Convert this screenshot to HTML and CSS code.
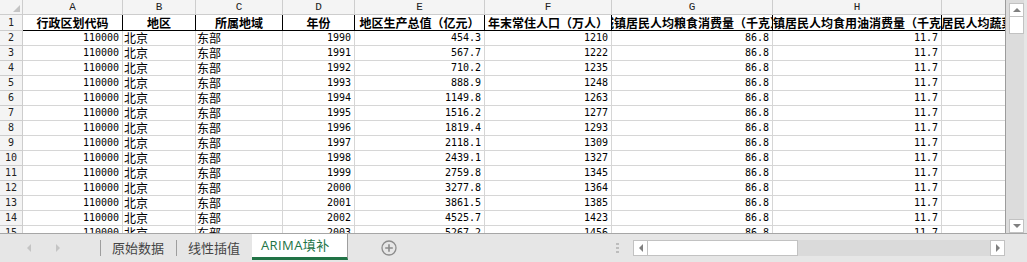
FILE: index.html
```html
<!DOCTYPE html>
<html lang="zh">
<head>
<meta charset="utf-8">
<title>ARIMA填补</title>
<link rel="stylesheet" href="styles.css">
</head>
<body>
<div class="app">
  <div class="main">
    <div class="sheet">
      <div class="grid">
        <div class="c ch corner"><span class="tri"></span></div>
        <div class="c ch">A</div><div class="c ch">B</div><div class="c ch">C</div><div class="c ch">D</div><div class="c ch">E</div><div class="c ch">F</div><div class="c ch">G</div><div class="c ch">H</div><div class="c ch"></div>

        <div class="c rh">1</div>
        <div class="c h"><span>行政区划代码</span></div><div class="c h"><span>地区</span></div><div class="c h"><span>所属地域</span></div><div class="c h"><span>年份</span></div><div class="c h"><span>地区生产总值（亿元）</span></div><div class="c h"><span>年末常住人口（万人）</span></div><div class="c h"><span>城镇居民人均粮食消费量（千克）</span></div><div class="c h"><span>城镇居民人均食用油消费量（千克）</span></div><div class="c h"><span>城镇居民人均蔬菜消费量（千克）</span></div>

        <div class="c rh">2</div><div class="c n">110000</div><div class="c t">北京</div><div class="c t">东部</div><div class="c n">1990</div><div class="c n">454.3</div><div class="c n">1210</div><div class="c n">86.8</div><div class="c n">11.7</div><div class="c"></div>
        <div class="c rh">3</div><div class="c n">110000</div><div class="c t">北京</div><div class="c t">东部</div><div class="c n">1991</div><div class="c n">567.7</div><div class="c n">1222</div><div class="c n">86.8</div><div class="c n">11.7</div><div class="c"></div>
        <div class="c rh">4</div><div class="c n">110000</div><div class="c t">北京</div><div class="c t">东部</div><div class="c n">1992</div><div class="c n">710.2</div><div class="c n">1235</div><div class="c n">86.8</div><div class="c n">11.7</div><div class="c"></div>
        <div class="c rh">5</div><div class="c n">110000</div><div class="c t">北京</div><div class="c t">东部</div><div class="c n">1993</div><div class="c n">888.9</div><div class="c n">1248</div><div class="c n">86.8</div><div class="c n">11.7</div><div class="c"></div>
        <div class="c rh">6</div><div class="c n">110000</div><div class="c t">北京</div><div class="c t">东部</div><div class="c n">1994</div><div class="c n">1149.8</div><div class="c n">1263</div><div class="c n">86.8</div><div class="c n">11.7</div><div class="c"></div>
        <div class="c rh">7</div><div class="c n">110000</div><div class="c t">北京</div><div class="c t">东部</div><div class="c n">1995</div><div class="c n">1516.2</div><div class="c n">1277</div><div class="c n">86.8</div><div class="c n">11.7</div><div class="c"></div>
        <div class="c rh">8</div><div class="c n">110000</div><div class="c t">北京</div><div class="c t">东部</div><div class="c n">1996</div><div class="c n">1819.4</div><div class="c n">1293</div><div class="c n">86.8</div><div class="c n">11.7</div><div class="c"></div>
        <div class="c rh">9</div><div class="c n">110000</div><div class="c t">北京</div><div class="c t">东部</div><div class="c n">1997</div><div class="c n">2118.1</div><div class="c n">1309</div><div class="c n">86.8</div><div class="c n">11.7</div><div class="c"></div>
        <div class="c rh">10</div><div class="c n">110000</div><div class="c t">北京</div><div class="c t">东部</div><div class="c n">1998</div><div class="c n">2439.1</div><div class="c n">1327</div><div class="c n">86.8</div><div class="c n">11.7</div><div class="c"></div>
        <div class="c rh">11</div><div class="c n">110000</div><div class="c t">北京</div><div class="c t">东部</div><div class="c n">1999</div><div class="c n">2759.8</div><div class="c n">1345</div><div class="c n">86.8</div><div class="c n">11.7</div><div class="c"></div>
        <div class="c rh">12</div><div class="c n">110000</div><div class="c t">北京</div><div class="c t">东部</div><div class="c n">2000</div><div class="c n">3277.8</div><div class="c n">1364</div><div class="c n">86.8</div><div class="c n">11.7</div><div class="c"></div>
        <div class="c rh">13</div><div class="c n">110000</div><div class="c t">北京</div><div class="c t">东部</div><div class="c n">2001</div><div class="c n">3861.5</div><div class="c n">1385</div><div class="c n">86.8</div><div class="c n">11.7</div><div class="c"></div>
        <div class="c rh">14</div><div class="c n">110000</div><div class="c t">北京</div><div class="c t">东部</div><div class="c n">2002</div><div class="c n">4525.7</div><div class="c n">1423</div><div class="c n">86.8</div><div class="c n">11.7</div><div class="c"></div>
        <div class="c rh">15</div><div class="c n">110000</div><div class="c t">北京</div><div class="c t">东部</div><div class="c n">2003</div><div class="c n">5267.2</div><div class="c n">1456</div><div class="c n">86.8</div><div class="c n">11.7</div><div class="c"></div>
      </div>
    </div>
    <div class="vscroll">
      <div class="vtrack">
        <div class="btn vbtn"><span class="ar up"></span></div>
        <div class="vthumb"></div>
        <div class="fill"></div>
        <div class="btn vbtn"><span class="ar down"></span></div>
      </div>
    </div>
  </div>
  <div class="bar">
    <div class="nav"><span class="nar nl"></span><span class="nar nr"></span></div>
    <div class="sep"></div>
    <div class="tab">原始数据</div>
    <div class="sep"></div>
    <div class="tab">线性插值</div>
    <div class="tab active">ARIMA填补</div>
    <div class="add">
      <svg width="16" height="16" viewBox="0 0 16 16"><circle cx="8" cy="8" r="7" fill="none" stroke="#8c8c8c" stroke-width="1.3"/><path d="M8 4.2v7.6M4.2 8h7.6" stroke="#8c8c8c" stroke-width="1.6"/></svg>
    </div>
    <div class="dots"><i></i><i></i><i></i></div>
    <div class="hscroll">
      <div class="btn hbtn"><span class="ar left"></span></div>
      <div class="hthumb"></div>
      <div class="fill"></div>
      <div class="btn hbtn"><span class="ar right"></span></div>
    </div>
  </div>
</div>
</body>
</html>
```

FILE: styles.css
```css
* { box-sizing: border-box; margin: 0; padding: 0; }
html, body { width: 1027px; height: 262px; overflow: hidden; background: #e6e6e6; }
body { font-family: "Noto Sans CJK SC", sans-serif; color: #000; }

.app { display: flex; flex-direction: column; height: 262px; }
.main { display: flex; height: 234px; border-bottom: 1px solid #a6a6a6; }

.sheet { width: 1006px; height: 233px; overflow: hidden; border-right: 1px solid #9c9c9c; background: #fff; flex: none; }
.grid {
  display: grid;
  grid-template-columns: 23px 100px 73px 87px 72px 130px 127px 161px 169px 132px;
  grid-template-rows: 15px 16px repeat(14, 15px);
  width: max-content;
}
.c {
  border-right: 1px solid #d6d6d6;
  border-bottom: 1px solid #d6d6d6;
  overflow: hidden;
  white-space: nowrap;
  font-size: 12px;
  line-height: 14px;
  display: flex;
  align-items: center;
}
.ch, .rh {
  background: #f4f4f4;
  justify-content: center;
  font-family: "Liberation Mono", monospace;
  font-size: 11px;
  border-color: #cdcdcd;
  color: #222;
}
.rh { font-family: "DejaVu Sans Mono", monospace; font-size: 10px; }
.corner { position: relative; }
.tri {
  position: absolute; right: 2px; bottom: 2px;
  width: 0; height: 0;
  border-left: 7px solid transparent;
  border-bottom: 7px solid #c4c4c4;
}
.h { font-weight: bold; justify-content: center; border-right-color: #000; border-bottom-color: #000; }
.h span { flex: none; }
.n { justify-content: flex-end; padding-right: 3px; font-family: "DejaVu Sans Mono", monospace; font-size: 10px; }
.t { padding-left: 1px; }

.vscroll { width: 21px; height: 233px; flex: none; background: #e6e6e6; }
.vtrack { width: 18px; height: 233px; background: #dcdcdc; display: flex; flex-direction: column; padding: 3px 0 0 3px; }
.btn { background: #fff; border: 1px solid #c2c2c2; display: flex; align-items: center; justify-content: center; flex: none; }
.vbtn { width: 15px; height: 14px; }
.vthumb { width: 15px; height: 17px; background: #fff; border: 1px solid #c2c2c2; border-top: none; }
.fill { flex: 1; }
.ar { width: 0; height: 0; display: block; }
.up { border-left: 4px solid transparent; border-right: 4px solid transparent; border-bottom: 4px solid #808080; }
.down { border-left: 4px solid transparent; border-right: 4px solid transparent; border-top: 4px solid #808080; }
.left { border-top: 4px solid transparent; border-bottom: 4px solid transparent; border-right: 4px solid #808080; }
.right { border-top: 4px solid transparent; border-bottom: 4px solid transparent; border-left: 4px solid #808080; }

.bar { display: flex; align-items: center; height: 28px; }
.nav { width: 100px; display: flex; align-items: center; padding-left: 27px; gap: 25px; }
.nar { width: 0; height: 0; display: block; border-top: 4px solid transparent; border-bottom: 4px solid transparent; }
.nl { border-right: 4px solid #c4c4c4; }
.nr { border-left: 4px solid #c4c4c4; }
.sep { width: 1px; height: 16px; background: #9e9e9e; flex: none; }
.tab { width: 75px; padding-left: 11px; font-size: 13px; color: #444; flex: none; line-height: 18px; }
.active {
  width: 96px; height: 26px; align-self: flex-start;
  background: #fff; color: #217346;
  border-bottom: 3px solid #217346;
  border-right: 1px solid #9e9e9e;
  padding-left: 9px; padding-top: 2px;
  font-family: "Open Sans", "Noto Sans CJK SC", sans-serif;
  letter-spacing: 0.4px;
}
.add { margin-left: 33px; width: 16px; height: 16px; flex: none; }
.add svg { display: block; }
.dots { margin-left: 219px; width: 3px; display: flex; flex-direction: column; gap: 2px; flex: none; }
.dots i { display: block; width: 3px; height: 2px; background: #bdbdbd; }
.hscroll { margin-left: 14px; width: 372px; height: 16px; background: #dadada; display: flex; flex: none; }
.hbtn { width: 15px; height: 16px; }
.hthumb { width: 150px; height: 16px; background: #fff; border: 1px solid #c2c2c2; border-left: none; }
```
